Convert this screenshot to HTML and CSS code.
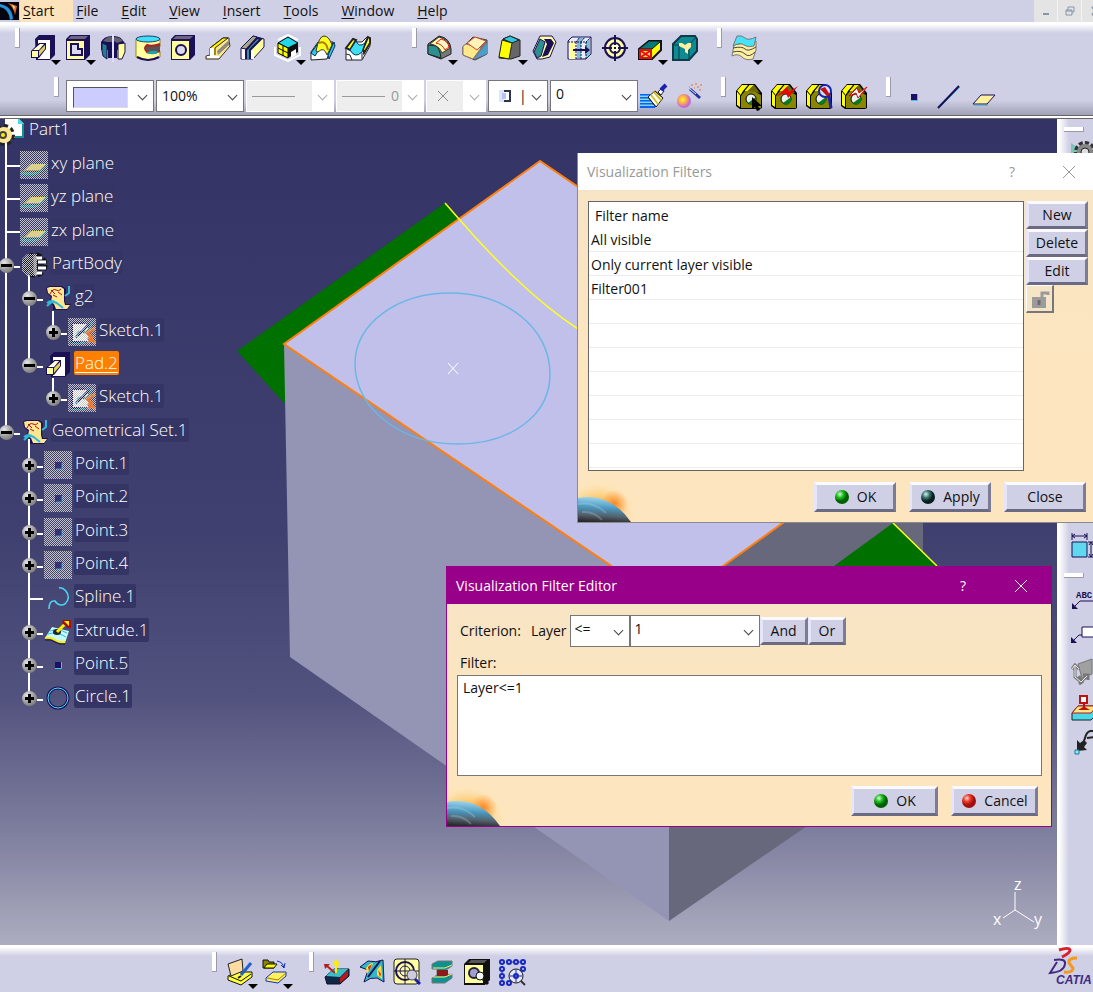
FILE: index.html
```html
<!DOCTYPE html>
<html lang="en">
<head>
  <meta charset="UTF-8" />
  <meta name="viewport" content="width=device-width, initial-scale=1.0" />
  <title>CATIA - Part1</title>
  <link rel="stylesheet" href="styles.css">
</head>
<body>
  <!-- shared symbols -->
  <svg class="defs" aria-hidden="true">
    <defs>
      <pattern id="dither" width="4" height="4" patternUnits="userSpaceOnUse">
        <path d="M0 0h1v1H0zM2 0h1v1H2zM1 1h1v1H1zM3 1h1v1H3zM0 2h1v1H0zM2 2h1v1H2zM1 3h1v1H1zM3 3h1v1H3z" fill="#c4c4c4" shape-rendering="crispEdges"/>
      </pattern>
      <radialGradient id="glow"><stop offset="0" stop-color="#ff9a3c"/><stop offset=".4" stop-color="#fbc050"/><stop offset="1" stop-color="#fde6bf" stop-opacity="0"/></radialGradient>
      <radialGradient id="flare"><stop offset="0" stop-color="#ff8420"/><stop offset="1" stop-color="#ff9a3c" stop-opacity="0"/></radialGradient>
      <linearGradient id="globe" x1=".55" y1="0" x2=".4" y2="1"><stop offset="0" stop-color="#a5dcf5"/><stop offset=".45" stop-color="#4a96bc"/><stop offset=".75" stop-color="#54606c"/><stop offset="1" stop-color="#2a2a2c"/></linearGradient>
      <radialGradient id="green" cx=".35" cy=".3"><stop offset="0" stop-color="#d8ffd0"/><stop offset=".5" stop-color="#20c020"/><stop offset="1" stop-color="#006000"/></radialGradient>
      <radialGradient id="teal" cx=".35" cy=".3"><stop offset="0" stop-color="#d5f5ee"/><stop offset=".5" stop-color="#3d7a70"/><stop offset="1" stop-color="#07201e"/></radialGradient>
      <radialGradient id="red" cx=".35" cy=".3"><stop offset="0" stop-color="#ffd9d0"/><stop offset=".5" stop-color="#f03a28"/><stop offset="1" stop-color="#a01010"/></radialGradient>
      <radialGradient id="ball" cx=".4" cy=".4"><stop offset="0" stop-color="#fff04a"/><stop offset=".5" stop-color="#ffb43c"/><stop offset="1" stop-color="#c76bd0"/></radialGradient>
      <symbol id="camera" viewBox="0 0 28 28">
        <path d="M1 23V8l6-7h13l7 9v15l-2 1H5z" fill="#000"/>
        <path d="M2 8l5-6h6L8 8l-3 5v11l-3-2z" fill="#ff0"/>
        <path d="M14 2h5l-6 6H9z" fill="#f0f000"/>
        <path d="M6 13l4-5h9l7 4v13H6z" fill="#8a8500"/>
        <path d="M13 8l6-6 6 8" fill="#6d6900"/>
        <path d="M9 8l5-6M6 13L2 8" stroke="#000" fill="none"/>
        <circle cx="16" cy="16" r="5" fill="#e8f0f0" stroke="#000"/>
        <path d="M13 20l8-6v5l-4 3z" fill="#0a7a20"/>
      </symbol>
      <symbol id="pad" viewBox="0 0 28 28">
        <path d="M6 5l4-4h16v20l-5 5H7z" fill="#1b0f55"/>
        <path d="M9 6h12v19H9z" fill="#fff"/>
        <path d="M2 17l8-8h7v6l-7 9H2z" fill="#1b0f55"/>
        <path d="M3 17h6v6H3z" fill="#ffffa0"/><path d="M4 16l7-6h4l-5 6z" fill="#ffffd8"/><path d="M10 17l6-6v4l-6 7z" fill="#e0d060"/>
      </symbol>
      <symbol id="plane" viewBox="0 0 28 28">
        <path d="M4 20L11 13h15l-6 7z" fill="#f0dc50"/><path d="M1 22h17l9-9M2 23h14" stroke="#117a88" stroke-width="2" fill="none"/><path d="M5 20h15" stroke="#1b0f55"/>
        <rect width="28" height="28" fill="url(#dither)"/>
      </symbol>
      <symbol id="point" viewBox="0 0 28 28">
        <rect x="11" y="11" width="6" height="6" fill="#1b0f66"/><path d="M11 17.500h6.500V11" stroke="#36c8e8" fill="none"/>
      </symbol>
      <symbol id="hiddenpoint" viewBox="0 0 28 28">
        <rect width="28" height="28" fill="url(#dither)"/><rect x="11" y="11" width="7" height="7" fill="#1b0f66" opacity=".7"/><path d="M12 18h6v-6" stroke="#36c8e8" fill="none" opacity=".7"/>
      </symbol>
      <symbol id="sketch" viewBox="0 0 28 28">
        <rect x="5" y="6" width="15" height="17" fill="#fff"/>
        <path d="M8 20q2-8 7-6t9-10M3 25h14" stroke="#117a88" stroke-width="2" fill="none"/>
        <path d="M4 5v19h8M4 5h12M10 18l11-12" stroke="#1b0f55" stroke-width="2" fill="none"/>
        <path d="M27 10l-8 5 5 4-4 6M20 19l8 6" stroke="#f36a10" stroke-width="3" fill="none"/>
        <rect width="28" height="28" fill="url(#dither)"/>
        <path d="M26 12l-6 4 4 3-3 5M22 20l5 4" stroke="#f36a10" stroke-width="2" fill="none" opacity=".7"/>
      </symbol>
      <symbol id="geoset" viewBox="0 0 28 28">
        <path d="M2 4l3-2h13l4 3-1 12 1 3h5l-4 6H9v-5l-4-2 2-6-4-4z" fill="#1b0f55"/>
        <path d="M3 4l3-1h11l3 2v12l1 4h5l-3 4H12l-2-5 -3-2 1-6-4-3z" fill="#fce790"/>
        <path d="M6 10q3-6 6-4t5-1M7 6l4 4M14 8l4 3M9 11l4 2" stroke="#b01020" fill="none"/>
        <path d="M3 22q6-7 11-2l5 4M3 19q5-4 9 0M25 2v7l-4 3" stroke="#30b8d8" stroke-width="2" fill="none"/>
      </symbol>
    </defs>
  </svg>

  <nav class="menubar">
    <svg class="start-logo" viewBox="0 0 20 22"><rect y="2" width="19" height="18" fill="#050510"/><path d="M0 4q12 2 13 15l-3 1Q9 9 0 7z" fill="#2490d8"/><path d="M8 3l9 3-2 9q-1-7-7-12z" fill="#e06a20"/><path d="M12 4l3 3-1 3z" fill="#ffd7a0"/></svg>
    <button class="menu active"><u>S</u>tart</button>
    <button class="menu"><u>F</u>ile</button>
    <button class="menu"><u>E</u>dit</button>
    <button class="menu"><u>V</u>iew</button>
    <button class="menu"><u>I</u>nsert</button>
    <button class="menu"><u>T</u>ools</button>
    <button class="menu"><u>W</u>indow</button>
    <button class="menu"><u>H</u>elp</button>
    <div class="mdi">
      <button aria-label="Minimize"><svg viewBox="0 0 12 12"><path d="M3 9h6" stroke="#8596ad" stroke-width="2"/></svg></button>
      <button aria-label="Restore"><svg viewBox="0 0 12 12"><path d="M2 5h6v5H2zM4 5V2h6v5H8M2 6h6" stroke="#8596ad" fill="none"/></svg></button>
      <button aria-label="Close window"><svg viewBox="0 0 12 12"><path d="M4 2l4 4-4 4M10 2L6 6l4 4" stroke="#8596ad" stroke-width="2" fill="none"/></svg></button>
    </div>
  </nav>

  <header class="toolbars">
    <div class="row row-features">
      <div class="group group-wide">
        <span class="handle"></span>
        <button class="tool drop" aria-label="Pad"><svg><use href="#pad"/></svg></button>
        <button class="tool drop" aria-label="Pocket"><svg viewBox="0 0 28 28"><path d="M2 5l4-4h20v20l-5 5H2z" fill="#1b0f55"/><path d="M3 7h17v18H3z" fill="#ffffa0"/><path d="M4 5l3-3h17l-3 3z" fill="#6c6480"/><path d="M7 10h7v5h4v6H7z" fill="#d9d9ef" stroke="#1b0f55" stroke-width="2"/></svg></button>
        <button class="tool" aria-label="Shaft"><svg viewBox="0 0 28 28"><path d="M2 8q3-6 11-6v22H9v-8H2z" fill="#1b0f55"/><path d="M25 8q-3-6-10-6v22h3v-8h7z" fill="#1b0f55"/><path d="M3 9l5 2v14l-4-3-1-5z" fill="#21808c" stroke="#1b0f55"/><path d="M19 10l7-1v9l-3 7h-4z" fill="#ffffa0" stroke="#1b0f55"/><path d="M4 7q5-5 9-4v5H8zM15 3q6 0 9 4l-6 2-3-2z" fill="#606070"/><path d="M14 0v28" stroke="#dfe0ff" stroke-width="2"/></svg></button>
        <button class="tool" aria-label="Groove"><svg viewBox="0 0 28 28"><path d="M2 5v18q12 6 24 0v-5l-4-2 4-3V5z" fill="#ffffa0" stroke="#a08028"/><ellipse cx="14" cy="5" rx="12" ry="3" fill="#40dfff" stroke="#1b4060"/><path d="M26 10q-8 3-13 1-4 3 0 7 6 2 13-1" stroke="#b02020" stroke-width="2" fill="#555"/><path d="M12 19q6-4 13-1-4 4-13 1z" fill="#21a0b0"/><path d="M3 23q11 6 22 0" stroke="#1b0f55" fill="none" stroke-width="2"/></svg></button>
        <button class="tool" aria-label="Hole"><svg viewBox="0 0 28 28"><path d="M2 5l4-4h20v20l-5 5H2z" fill="#1b0f55"/><path d="M3 7h17v18H3z" fill="#ffffa0"/><path d="M4 5l3-3h17l-3 3z" fill="#6c6480"/><circle cx="12" cy="16" r="5" fill="#d9d9ef" stroke="#1b0f55" stroke-width="2"/></svg></button>
        <button class="tool" aria-label="Rib"><svg viewBox="0 0 28 28"><path d="M2 25v-3l4-1v-7L19 4h6v3l1 5L15 25z" fill="#ffe98a" stroke="#333"/><path d="M13 17L25 6v5L14 21z" fill="#8f8a80"/><path d="M6 14L19 4h5L11 14v7" fill="#fff000" stroke="#222"/><path d="M3 22h3v-8h4v8h5v2H3z" fill="#fff"/></svg></button>
        <button class="tool" aria-label="Slot"><svg viewBox="0 0 28 28"><path d="M2 25V14L14 2l11 3v8L14 25z" fill="#ffffa0" stroke="#1b0f55"/><path d="M3 15h4v10H3zM11 17h4v8h-4z" fill="#fff"/><path d="M7 25v-9L18 4l4 1-11 11v9" fill="#3a8fa8" stroke="#1b0f55" stroke-width="2"/><path d="M2 14L14 2l4 1L7 15z" fill="#aaa68a" stroke="#1b0f55"/></svg></button>
        <button class="tool drop" aria-label="Solid Combine"><svg viewBox="0 0 28 28"><path d="M1 13v8l13 6 12-6v-8M4 6l10-5 10 5" fill="none" stroke="#fff" stroke-width="2"/><path d="M4 9l10-6 10 6-10 5z" fill="#1fd8e8" stroke="#000"/><path d="M4 9v10l10 5V14z" fill="#ff0" stroke="#000"/><path d="M14 14l10-5v9l-10 6z" fill="#111"/><path d="M9 12v10M4 14l10 5" stroke="#000"/><path d="M17 18l5-3v6l-5 3z" fill="#fff"/></svg></button>
        <button class="tool" aria-label="Multi-sections Solid"><svg viewBox="0 0 28 28"><path d="M2 26V18L9 8h15l-6 17z" fill="#fff" stroke="#222"/><path d="M2 19L10 8l3 2-7 12zM19 21l6-13 1 4-6 13z" fill="#30c8e0" stroke="#036"/><path d="M7 17Q10 2 15 2q5 0 8 9l-5 10q-3-9-9-3z" fill="#ffff20" stroke="#333"/><path d="M10 9q7-3 9 7" stroke="#b08000" stroke-width="2" fill="none"/></svg></button>
        <button class="tool" aria-label="Removed Multi-sections Solid"><svg viewBox="0 0 28 28"><path d="M2 26V14l7-9 4 3h5l5-5 3 1v8l-8 14z" fill="#fff" stroke="#222"/><path d="M2 14l7-9 3 1-6 10zM19 15l5-12 2 1v5l-6 10z" fill="#ffff20" stroke="#222" stroke-width="2"/><path d="M6 16l6-9q3 7 9 2l-3 9q-7 7-12-2z" fill="#40dff0" stroke="#036"/><path d="M2 20l4 1 2 5M18 25v-6" stroke="#222" fill="none"/></svg></button>
      </div>
      <div class="group">
        <span class="handle"></span>
        <button class="tool drop" aria-label="Edge Fillet"><svg viewBox="0 0 28 28"><path d="M2 10l11-8q11 2 12 13v5l-10 5L2 20z" fill="#777" stroke="#222"/><path d="M2 11l8 1q4 3 5 12L2 20z" fill="#2c9090" stroke="#222"/><path d="M4 10l9-7q9 2 11 11l-8 5q-3-8-12-9z" fill="#ffffa0" stroke="#333"/><path d="M10 9l5-4q7 2 8 8l-4 3q-3-6-9-7z" fill="#fff6c8" stroke="#e02020"/></svg></button>
        <button class="tool" aria-label="Chamfer"><svg viewBox="0 0 28 28"><path d="M2 13L12 3l14 3v14l-12 6-12-5z" fill="#777" stroke="#444"/><path d="M13 25L26 9v11z" fill="#4c9dcc"/><path d="M2 12l3-2 15 4-8 11-10-4z" fill="#ffe98a" stroke="#876"/><path d="M6 9l8-6 11 4-9 9z" fill="#fff3b8" stroke="#d04030"/></svg></button>
        <button class="tool drop" aria-label="Draft Angle"><svg viewBox="0 0 28 28"><path d="M3 24L7 5l7-3 10 4v16l-9 3z" fill="#666" stroke="#222"/><path d="M7 5l7-3 9 4-7 3z" fill="#30c8e0" stroke="#222"/><path d="M3 23L6 6l10 3-3 16z" fill="#ff0" stroke="#222"/></svg></button>
        <button class="tool" aria-label="Shell"><svg viewBox="0 0 28 28"><path d="M2 17L9 2h12l4 6-6 15-8 2H6z" fill="#ffffa0" stroke="#1b0f55"/><path d="M3 18L9 5l5 3-4 14-4 2z" fill="#2c9090" stroke="#1b0f55"/><path d="M13 5h7l3 4-6 12-6 2 5-13z" fill="#1b0f55"/></svg></button>
        <button class="tool" aria-label="Thickness"><svg viewBox="0 0 28 28"><path d="M2 7l4-4h19v17l-5 5H2z" fill="#e6ecfa" stroke="#1b0f55"/><path d="M3 8h7v17H3z" fill="#ffffa0"/><path d="M12 4l-1 4v16h4V8l4-5zM20 8l4-4v17l-4 4z" fill="#38a0b8" opacity=".6"/><path d="M10 8v18M15 8v18M20 8v18M2 8h19M10 8l4-5M15 8l4-5M20 8l5-5" stroke="#1b0f55" stroke-dasharray="2 1" fill="none"/><path d="M7 16h14" stroke="#1b0f55" stroke-width="2"/><path d="M19 12l5 4-5 4z" fill="#1b0f55"/></svg></button>
        <button class="tool" aria-label="Thread/Tap"><svg viewBox="0 0 28 28"><circle cx="14" cy="14" r="10" fill="#ffffa0" stroke="#1b0f55" stroke-width="2"/><circle cx="14" cy="14" r="5" fill="#ffffc8" stroke="#1b0f55" stroke-width="2"/><path d="M14 1v10M14 17v10M1 14h10M17 14h10M14 13v2" stroke="#1b0f55" stroke-width="2"/></svg></button>
        <button class="tool drop" aria-label="Remove Face"><svg viewBox="0 0 28 28"><path d="M3 15l10-8h12v9l-9 9H3z" fill="#ff0" stroke="#111" stroke-width="2"/><path d="M3 15l10-8h12l-9 8z" fill="#0a7878" stroke="#111"/><path d="M4 16h11v8H4z" fill="#ffe04a" stroke="#e01010" stroke-width="2"/><path d="M5 17l9 6M14 17l-9 6" stroke="#e01010" stroke-width="2" fill="none"/></svg></button>
        <button class="tool" aria-label="Replace Face"><svg viewBox="0 0 28 28"><path d="M2 10l8-8h14l2 3v12l-8 9H2z" fill="#0e8a92" stroke="#103a48" stroke-width="2"/><path d="M2 11h6M8 11v15M18 15v11M10 3L3 10M18 11l7-8" stroke="#103a48" fill="none"/><path d="M8 9h3l3 2 3-2h3v4l-3 3v4l-3-2v-3l-6-3z" fill="#fff0a0"/></svg></button>
      </div>
      <div class="group group-near">
        <span class="handle"></span>
        <button class="tool drop" aria-label="Thick Surface"><svg viewBox="0 0 28 28"><path d="M1 22l2-11 22-4v9l-3 9q-7 2-11-2t-10-1z" fill="#fff0a0" stroke="#777"/><path d="M2 18q8-2 12 2t10-2M2 14q9-2 12 1t11-2" stroke="#444" fill="none"/><path d="M2 12L6 2q5-1 8 2t11-1l-2 9q-6 2-10-1t-11 1z" fill="#48e2fa" stroke="#777"/></svg></button>
      </div>
    </div>

    <div class="row row-props">
      <span class="handle"></span>
      <div class="combos">
        <label class="combo swatch"><select aria-label="Color"><option></option></select></label>
        <label class="combo"><select aria-label="Transparency"><option>100%</option></select></label>
        <label class="combo off line"><select aria-label="Line width" disabled><option></option></select></label>
        <label class="combo off line num"><select aria-label="Line type" disabled><option>0</option></select></label>
        <label class="combo off small"><svg class="mark" viewBox="0 0 12 12"><path d="M1 1l10 10M11 1L1 11" stroke="#888" fill="none"/></svg><select aria-label="Point symbol" disabled><option></option></select></label>
        <label class="combo small"><svg class="mark" viewBox="0 0 12 12"><path d="M0 0h5v12H0z" fill="#dfe4fa"/><path d="M3 3h4v6H3z" fill="#b4c4f4"/><path d="M5 1h6v10H5" stroke="#2b3350" stroke-width="2" fill="none"/></svg><select class="bar" aria-label="Rendering style"><option>|</option></select></label>
        <label class="combo top"><select aria-label="Layer"><option>0</option></select></label>
      </div>
      <button class="tool painter" aria-label="Painter"><svg viewBox="0 0 28 28"><path d="M0 12h10M0 15h11M0 18h12M0 21h14M0 24h15" stroke="#1060f0" stroke-width="2"/><path d="M0 13h9M0 16h10M0 19h12M0 22h15" stroke="#50e0ff"/><path d="M8 14l7-6 8 7-7 9z" fill="#fff" stroke="#222"/><path d="M11 12l7 9M14 9l7 8" stroke="#d8c020" stroke-width="2"/><path d="M8 14l8 10M15 8l8 7" stroke="#222" fill="none"/><path d="M18 9l4-4 2 3-3 4z" fill="#fff" stroke="#222"/><path d="M21 7l5-5" stroke="#1b20b0" stroke-width="4"/></svg></button>
      <button class="tool" aria-label="Wizard"><svg viewBox="0 0 28 28"><circle cx="9" cy="18" r="7" fill="url(#ball)"/><path d="M15 6l10 9" stroke="#2436a0" stroke-width="3"/><path d="M15 6l6 5" stroke="#d8e8ff"/><path d="M16 2h2M20 1h2M22 4h2M25 2h2M19 5h1M24 7h2M14 4h1" stroke="#e0a080" stroke-width="2"/></svg></button>
      <div class="group group-near">
        <span class="handle"></span>
        <button class="tool" aria-label="Capture select"><svg viewBox="0 0 28 28"><use href="#camera"/><path d="M17 14v12l3-2 2 4 3-1-2-4h4z" fill="#000"/></svg></button>
        <button class="tool" aria-label="Update"><svg viewBox="0 0 28 28"><use href="#camera"/><path d="M7 13L17 4l2 5 9-6-10 12-2-5z" fill="#f00000"/></svg></button>
        <button class="tool" aria-label="Inspect"><svg viewBox="0 0 28 28"><use href="#camera"/><circle cx="20" cy="8" r="6" fill="#cfe0f4" stroke="#1b20b0" stroke-width="2"/><path d="M15 6l5-2 5 8-3 1z" fill="#c01010"/><path d="M24 13l2 12" stroke="#1b20b0" stroke-width="3"/></svg></button>
        <button class="tool" aria-label="Manual update"><svg viewBox="0 0 28 28"><use href="#camera"/><path d="M9 13l8-8 2 5 8-6-9 11-2-5z" fill="#fff" stroke="#e00000"/></svg></button>
      </div>
      <div class="group group-near">
        <span class="handle"></span>
        <button class="tool" aria-label="Point"><svg><use href="#point"/></svg></button>
        <button class="tool" aria-label="Line"><svg viewBox="0 0 28 28"><path d="M4 25L25 4" stroke="#30c0e8"/><path d="M3 25L24 3" stroke="#1b0f55" stroke-width="2"/></svg></button>
        <button class="tool" aria-label="Plane"><svg viewBox="0 0 28 28"><path d="M3 21l8-9h14l-8 9z" fill="#fff0a0" stroke="#1b0f55"/><path d="M4 22h14" stroke="#30a0c0"/></svg></button>
      </div>
    </div>
  </header>

  <main class="workspace">
    <section class="viewport">
      <svg class="scene" viewBox="0 119 1057 826" preserveAspectRatio="xMinYMin slice">
        <path d="M445 203L237 351l47 52 176-184z" fill="#007000"/>
        <path d="M284 344l385 261v316L290 657z" fill="#9494b5"/>
        <path d="M669 605l254-183v324l-254 175z" fill="#68687c"/>
        <path d="M893 523l-59 43h103z" fill="#007000"/>
        <path d="M540 161L284 344l385 261 254-183z" fill="#c1c0ea" stroke="#ff7f0e" stroke-width="2"/>
        <path d="M445 203l14 16q24 28 53 56 34 33 66 54M893 523l44 43" stroke="#ffff20" stroke-width="1.500" fill="none"/>
        <path d="M355 364C355 323 398 293 450 293C506 293 550 328 550 374C550 416 510 444 458 444C400 444 355 408 355 364z" fill="none" stroke="#6cb6e6" stroke-width="1.500"/>
        <path d="M448 363l10 11M458 363l-10 11" stroke="#fff"/>
        <path d="M1015 892v18l-12 8M1015 910l19 12" stroke="#fff" fill="none"/>
        <g class="axis"><text x="1014" y="890">z</text><text x="993" y="925">x</text><text x="1034" y="925">y</text></g>
      </svg>

      <div class="tree-wrap">
        <svg class="links" viewBox="0 0 200 600">
          <path d="M6 20v297M6 51h14M6 84h14M6 117h14M29 160v90M53 196v20M53 263v20M29 324v258M29 484h14" stroke="#fff" stroke-width="2" fill="none"/>
        </svg>
        <ul class="tree">
          <li class="root"><svg viewBox="0 0 28 28"><path d="M5 0h13l6 6v14H5z" fill="#fff"/><path d="M18 0v6h6" fill="#48d8e8"/><path d="M23 6v13H15" stroke="#109098" stroke-width="2" fill="none"/><circle cx="4" cy="17" r="9" fill="none" stroke="#222" stroke-width="4" stroke-dasharray="4 3"/><circle cx="4" cy="17" r="8" fill="#fce790"/><circle cx="3" cy="17" r="3" fill="#fe0" stroke="#444" stroke-width="2"/></svg><span class="name bare">Part1</span></li>
          <li class="l1 leaf"><svg><use href="#plane"/></svg><span class="name">xy plane</span></li>
          <li class="l1 leaf"><svg><use href="#plane"/></svg><span class="name">yz plane</span></li>
          <li class="l1 leaf"><svg><use href="#plane"/></svg><span class="name">zx plane</span></li>
          <li class="l1"><button class="knob open" aria-label="Collapse PartBody"></button><svg viewBox="0 0 28 28"><circle cx="14" cy="14" r="10" fill="none" stroke="#111" stroke-width="5" stroke-dasharray="5 3"/><circle cx="14" cy="14" r="9" fill="#1c1c28"/><path d="M14 7h7M17 11h8M17 17h8M14 22h7" stroke="#fff" stroke-width="3"/><path d="M14 5v18" stroke="#888" stroke-width="3"/><path d="M6 3h10v22H6l-5-5V8z" fill="url(#dither)"/></svg><span class="name">PartBody</span></li>
          <li class="l2"><button class="knob open" aria-label="Collapse g2"></button><svg><use href="#geoset"/></svg><span class="name">g2</span></li>
          <li class="l3"><button class="knob" aria-label="Expand Sketch.1"></button><svg><use href="#sketch"/></svg><span class="name">Sketch.1</span></li>
          <li class="l2"><button class="knob open" aria-label="Collapse Pad.2"></button><svg><use href="#pad"/></svg><span class="name selected">Pad.2</span></li>
          <li class="l3"><button class="knob" aria-label="Expand Sketch.1"></button><svg><use href="#sketch"/></svg><span class="name">Sketch.1</span></li>
          <li class="l1"><button class="knob open" aria-label="Collapse Geometrical Set.1"></button><svg><use href="#geoset"/></svg><span class="name">Geometrical Set.1</span></li>
          <li class="l2"><button class="knob" aria-label="Expand Point.1"></button><svg><use href="#hiddenpoint"/></svg><span class="name">Point.1</span></li>
          <li class="l2"><button class="knob" aria-label="Expand Point.2"></button><svg><use href="#hiddenpoint"/></svg><span class="name">Point.2</span></li>
          <li class="l2"><button class="knob" aria-label="Expand Point.3"></button><svg><use href="#hiddenpoint"/></svg><span class="name">Point.3</span></li>
          <li class="l2"><button class="knob" aria-label="Expand Point.4"></button><svg><use href="#hiddenpoint"/></svg><span class="name">Point.4</span></li>
          <li class="l2 leaf"><svg viewBox="0 0 28 28"><path d="M5 25q0-9 6-8 4 6 10 3 6-6 1-13-4-4-7-3" stroke="#48d8f4" stroke-width="1.500" fill="none"/></svg><span class="name">Spline.1</span></li>
          <li class="l2"><button class="knob" aria-label="Expand Extrude.1"></button><svg viewBox="0 0 28 28"><path d="M1 20l7-11 17 4-4 12q-5 0-9-3t-11-2z" fill="#c4f8ff"/><path d="M6 13q8-3 17 2M4 16q8-3 18 3" stroke="#30b8d8" fill="none"/><path d="M1 20q6-1 10 2t10 2" stroke="#fe0" stroke-width="2" fill="none"/><path d="M1 22q6-1 10 2t10 2" stroke="#1b0f55" fill="none"/><ellipse cx="13" cy="14" rx="4" ry="3" fill="#222"/><path d="M13 14l8-8" stroke="#fe0" stroke-width="3"/><path d="M19 2h8v8h-3l-6-5z" fill="#a01010"/><path d="M20 3h5v5z" fill="#fe0"/></svg><span class="name">Extrude.1</span></li>
          <li class="l2"><button class="knob" aria-label="Expand Point.5"></button><svg><use href="#point"/></svg><span class="name">Point.5</span></li>
          <li class="l2"><button class="knob" aria-label="Expand Circle.1"></button><svg viewBox="0 0 28 28"><circle cx="14" cy="14" r="10" stroke="#1b0f55" stroke-width="3" fill="none"/><circle cx="14" cy="14" r="10" stroke="#48e2fa" fill="none"/></svg><span class="name">Circle.1</span></li>
        </ul>
      </div>
    </section>

    <aside class="sidebar">
      <span class="handle flat"></span>
      <button class="tool gear" aria-label="Part Design"><svg viewBox="0 0 28 28"><path d="M0 3l6 4v14H0z" fill="#7cc4b8"/><circle cx="14" cy="12" r="9" stroke="#333" stroke-width="4" stroke-dasharray="4 2" fill="none"/><circle cx="14" cy="12" r="8" fill="#888"/><circle cx="14" cy="12" r="4" fill="#ddd" stroke="#222"/></svg></button>
      <button class="tool" aria-label="Constraint"><svg viewBox="0 0 28 28"><path d="M1 9h15v15H1z" fill="#60d8ee" stroke="#1b0f55"/><path d="M1 3h15M1 0v7M16 0v7M20 9v15M17 9h8M17 24h8M4 1L1 3l3 2M13 1l3 2-3 2M18 12l2-3 2 3M18 21l2 3 2-3" stroke="#1b0f55" fill="none"/></svg></button>
      <span class="handle flat second"></span>
      <button class="tool" aria-label="Text with Leader"><svg viewBox="0 0 28 28"><text class="abc" x="5" y="12">ABC</text><path d="M28 15H9l-6 6" stroke="#1b0f55" fill="none"/><path d="M1 17v6h6z" fill="#1b0f55"/></svg></button>
      <button class="tool" aria-label="Flag Note with Leader"><svg viewBox="0 0 28 28"><path d="M11 5h18v10H11z" fill="#fff" stroke="#1b0f55"/><path d="M11 13H8l-5 5" stroke="#1b0f55" fill="none"/><path d="M0 15v6h6z" fill="#1b0f55"/></svg></button>
      <button class="tool" aria-label="Annotation Plane"><svg viewBox="0 0 28 28"><path d="M7 6l14-5v15l-10 4z" fill="#a0a0a0" stroke="#777"/><path d="M4 7v12l6 5 7-7M1 11l3-4 4 4M8 18l3 6-3 2M12 17h5v5" stroke="#777" stroke-width="3" fill="none"/><path d="M4 8v11l6 5 6-6M1 11l3-4 4 4" stroke="#eee" fill="none"/></svg></button>
      <button class="tool" aria-label="Datum"><svg viewBox="0 0 28 28"><path d="M1 19l6-7h19v8l-6 6H1z" fill="#48d8e8" stroke="#222"/><path d="M1 19l6-7h19l-6 7z" fill="#ffe880" stroke="#c01010"/><path d="M9 2h7v7H9z" fill="#fff" stroke="#c01010" stroke-width="2"/><path d="M12 10v3l-5 3h12l-5-3v-3" fill="#c01010"/></svg></button>
      <button class="tool" aria-label="Text leader"><svg viewBox="0 0 28 28"><path d="M6 21V10l3 3 4-3 3 3-3 4 3 3z" fill="#222"/><path d="M13 11l2-6q2-4 5-4h6v10h-3M16 8l7-1" stroke="#222" stroke-width="2" fill="none"/><path d="M4 20h4v4H4z" fill="#9fe0f0" stroke="#1080a0"/></svg></button>
    </aside>

    <section class="dialog filters">
      <header class="title"><h2>Visualization Filters</h2><button class="help">?</button><button class="close" aria-label="Close dialog"><svg viewBox="0 0 14 14"><path d="M1 1l12 12M13 1L1 13"/></svg></button></header>
      <div class="content">
        <div class="columns">
          <div class="list">
            <table>
              <thead><tr><th>Filter name</th></tr></thead>
              <tbody>
                <tr><td>All visible</td></tr>
                <tr><td>Only current layer visible</td></tr>
                <tr><td>Filter001</td></tr>
                <tr><td></td></tr><tr><td></td></tr><tr><td></td></tr><tr><td></td></tr><tr><td></td></tr><tr><td></td></tr><tr><td></td></tr>
              </tbody>
            </table>
          </div>
          <div class="actions">
            <button class="btn">New</button>
            <button class="btn">Delete</button>
            <button class="btn">Edit</button>
            <button class="btn lock" aria-label="Lock" disabled><svg viewBox="0 0 20 20"><path d="M2 8h14v11H2z" fill="#9b9b9b"/><path d="M12 8V4h6v2" stroke="#9b9b9b" stroke-width="3" fill="none"/><path d="M9 11v5" stroke="#6c6c6c" stroke-width="3"/></svg></button>
          </div>
        </div>
        <footer class="buttons">
          <button class="btn"><svg viewBox="0 0 16 16"><circle cx="8" cy="8" r="7" fill="url(#green)"/></svg>OK</button>
          <button class="btn"><svg viewBox="0 0 16 16"><circle cx="8" cy="8" r="7" fill="url(#teal)"/></svg>Apply</button>
          <button class="btn">Close</button>
        </footer>
      </div>
      <svg class="planet" viewBox="0 0 60 42"><ellipse cx="20" cy="34" rx="40" ry="34" fill="url(#glow)"/><circle cx="36" cy="24" r="14" fill="url(#flare)"/><path d="M0 18Q32 12 53 42H0z" fill="url(#globe)"/><path d="M0 24q16-3 28 9M4 32q12-1 20 8" stroke="#c2dfee" stroke-width="2" opacity=".25" fill="none"/></svg>
    </section>

    <section class="dialog editor">
      <header class="title"><h2>Visualization Filter Editor</h2><button class="help">?</button><button class="close" aria-label="Close dialog"><svg viewBox="0 0 14 14"><path d="M1 1l12 12M13 1L1 13"/></svg></button></header>
      <div class="content">
        <div class="criterion">
          <span class="caption">Criterion:</span>
          <label for="operator">Layer</label>
          <span class="combo op top"><select id="operator"><option>&lt;=</option></select></span>
          <span class="combo value top"><select aria-label="Layer value"><option>1</option></select></span>
          <button class="btn">And</button>
          <button class="btn">Or</button>
        </div>
        <label class="filter-label" for="filterText">Filter:</label>
        <textarea id="filterText" spellcheck="false">Layer&lt;=1</textarea>
        <footer class="buttons">
          <button class="btn"><svg viewBox="0 0 16 16"><circle cx="8" cy="8" r="7" fill="url(#green)"/></svg>OK</button>
          <button class="btn"><svg viewBox="0 0 16 16"><circle cx="8" cy="8" r="7" fill="url(#red)"/></svg>Cancel</button>
        </footer>
      </div>
      <svg class="planet" viewBox="0 0 60 42"><ellipse cx="20" cy="34" rx="40" ry="34" fill="url(#glow)"/><circle cx="36" cy="24" r="14" fill="url(#flare)"/><path d="M0 18Q32 12 53 42H0z" fill="url(#globe)"/><path d="M0 24q16-3 28 9M4 32q12-1 20 8" stroke="#c2dfee" stroke-width="2" opacity=".25" fill="none"/></svg>
    </section>
  </main>

  <footer class="bottombar">
    <div class="group">
      <span class="handle"></span>
      <button class="tool drop" aria-label="Catalog"><svg viewBox="0 0 28 28"><path d="M2 18l8-4h16v5l-11 8-13-5z" fill="#ffff40" stroke="#111"/><path d="M2 6l14-5 1 12-12 5z" fill="#fcdca0" stroke="#222"/><path d="M3 18l12 5 10-7" stroke="#111" fill="none"/><path d="M15 17L25 5" stroke="#2060d0" stroke-width="3"/><path d="M12 20l3-2" stroke="#222" stroke-width="2"/></svg></button>
      <button class="tool drop" aria-label="Instantiate"><svg viewBox="0 0 28 28"><path d="M2 10V2h5l1 2h5v6z" fill="#8a8500" stroke="#111"/><path d="M3 10l3-4h10l-3 4z" fill="#ff0" stroke="#111"/><path d="M16 3q6 1 7 7M20 7l3 3 1-5" stroke="#1030c0" fill="none"/><path d="M5 20l7-6h13v4l-8 7-12-2z" fill="#fff060" stroke="#1030c0"/><path d="M6 20l11 2 8-7" stroke="#a08000" fill="none"/></svg></button>
    </div>
    <div class="group group-mid">
      <span class="handle"></span>
      <button class="tool" aria-label="Draft Analysis"><svg viewBox="0 0 28 28"><path d="M2 19l9-8h15v7l-9 8H4z" fill="#102848" stroke="#112"/><path d="M3 18l8-7h14l-8 8z" fill="#38c0c8"/><path d="M17 20l8-8v6l-8 7z" fill="#c01818"/><path d="M12 15L4 8" stroke="#b02020" stroke-width="2"/><path d="M1 6h6l-5 5z" fill="#b02020"/><path d="M13 15V5" stroke="#fe0" stroke-width="2"/><path d="M9 7l4-6 4 6z" fill="#fe0"/></svg></button>
      <button class="tool" aria-label="Curvature Analysis"><svg viewBox="0 0 28 28"><path d="M2 9l8-6q8 2 15-1l1 22-7-4q-7-1-13 4l4-12z" fill="#30b8c8" stroke="#1b0f55"/><path d="M8 10q6-7 7-4l-6 10z" fill="#ffe030"/><path d="M10 9l4-3-3 7z" fill="#e02010"/><path d="M19 12l4-5 1 14-5-4z" fill="#ffe030"/><path d="M20 12l3 4-1 3z" fill="#e02010"/><path d="M10 19L22 3" stroke="#1b0f55" stroke-width="2"/></svg></button>
      <button class="tool" aria-label="Tap/Thread Analysis"><svg viewBox="0 0 28 28"><rect x="1" y="1" width="25" height="25" rx="3" fill="#ffffa0" stroke="#222"/><circle cx="12" cy="13" r="9" fill="none" stroke="#1b0f55" stroke-width="2"/><circle cx="12" cy="13" r="5" fill="none" stroke="#1b0f55"/><path d="M12 1v25M1 13h25" stroke="#1b0f55"/><circle cx="19" cy="17" r="5" fill="#ccd" stroke="#445"/><path d="M22 21l5 5" stroke="#1b20b0" stroke-width="3"/></svg></button>
      <button class="tool" aria-label="Section"><svg viewBox="0 0 28 28"><path d="M4 6l6-3h14v5l-6 4v5l6-1v4l-7 5H4v-5l5-3v-6H4z" fill="#109090" stroke="#777"/><path d="M9 12h11v6H9z" fill="#8c1a1a"/><path d="M5 10h12l7-3M5 19h12l7-3" stroke="#fff060" fill="none"/></svg></button>
      <button class="tool" aria-label="Inspect Hole"><svg viewBox="0 0 28 28"><path d="M1 6l5-5h21v21l-5 5H1z" fill="#111"/><path d="M5 5l3-3h16l-3 3z" fill="#555"/><path d="M2 7h18v18H2z" fill="#ffffa0"/><circle cx="11" cy="15" r="5" fill="#a0a0d0" stroke="#223" stroke-width="2"/><circle cx="17" cy="18" r="4" fill="#f4f8f8" stroke="#111"/><path d="M20 21l5 5" stroke="#111" stroke-width="3"/></svg></button>
      <button class="tool" aria-label="Pattern Analysis"><svg viewBox="0 0 28 28"><path d="M2 4h24M4 2v24" stroke="#1828c0" stroke-dasharray="2 1"/><g fill="#cfcfe6" stroke="#1828c0" stroke-width="2"><circle cx="4" cy="4" r="2"/><circle cx="11" cy="4" r="2"/><circle cx="18" cy="4" r="2"/><circle cx="25" cy="4" r="2"/><circle cx="4" cy="11" r="2"/><circle cx="4" cy="18" r="2"/><circle cx="4" cy="25" r="2"/><circle cx="25" cy="11" r="2"/><circle cx="11" cy="25" r="2"/></g><circle cx="18" cy="18" r="7" fill="#e4e8f6" stroke="#111"/><circle cx="18" cy="18" r="2" fill="none" stroke="#1828c0" stroke-width="2"/><path d="M18 12v12M12 18h12" stroke="#1828c0"/><path d="M23 23l4 4" stroke="#333" stroke-width="2"/></svg></button>
    </div>
    <svg class="brand" viewBox="0 0 48 44">
      <path d="M12 4q10-3 11 0 0 3-8 7" stroke="#d8202c" stroke-width="3" fill="none"/>
      <path d="M7 14q12-2 11 4-1 8-15 9l7-11" stroke="#402a80" stroke-width="2" fill="none"/>
      <path d="M30 12q-9 0-8 5l4 5q0 5-9 4" stroke="#f39a1c" stroke-width="3" fill="none"/>
      <text x="9" y="38">CATIA</text>
    </svg>
  </footer>
</body>
</html>
```
FILE: styles.css
```css
* {
  box-sizing: border-box;
}
body {
  margin: 0;
  height: 100vh;
  display: flex;
  flex-direction: column;
  overflow: hidden;
  background: #cfcfe6;
  color: #111;
  font-family: "Open Sans", "Noto Sans", sans-serif;
  font-size: 14px;
  line-height: 20px;
}
button, select, textarea {
  font: inherit;
  color: inherit;
  border: none;
  background: none;
  padding: 0;
  margin: 0;
  border-radius: 0;
}
svg {
  display: block;
}
.defs {
  position: absolute;
  width: 0;
  height: 0;
}

/* menu */
.menubar {
  display: flex;
  height: 22px;
  flex: none;
}
.start-logo {
  width: 20px;
  height: 22px;
}
.menu {
  padding: 0 20px 0 3px;
}
.menu.active {
  padding-right: 19px;
  background: #fde3bb;
}
.menu u {
  text-underline-offset: 2px;
}
.mdi {
  margin-left: auto;
  margin-right: -12px;
  display: flex;
  gap: 1px;
  background: #f4f4f8;
}
.mdi button {
  width: 23px;
  background: #e4e4e4;
}
.mdi svg {
  width: 12px;
  height: 12px;
  margin: auto;
}

/* toolbars */
.toolbars {
  flex: none;
  height: 97px;
  padding-top: 5px;
  border-bottom: 4px double #666;
  background: linear-gradient(#fff 0, #fff 2px, #cfcfe6 11px, #cfcfe6 78px, #a0a0b6 93px);
}
.row {
  display: flex;
}
.row-features {
  padding-left: 15px;
  height: 48px;
}
.row-props {
  padding-left: 54px;
}
.group {
  display: flex;
  gap: 7px;
}
.group-wide {
  margin-right: 40px;
}
.group-near {
  margin-left: 18px;
}
.group-mid {
  margin-left: 20px;
}
.handle {
  width: 5px;
  height: 20px;
  margin: 1px 2px 0 0;
  background: #fff;
  border-right: 1px solid #9a9aa8;
  border-bottom: 1px solid #9a9aa8;
}
.tool {
  position: relative;
  flex: none;
  width: 28px;
  height: 28px;
  margin-top: 7px;
}
.tool svg {
  width: 28px;
  height: 28px;
}
.drop::after {
  content: "";
  position: absolute;
  left: 22px;
  top: 26px;
  border: 5px solid transparent;
  border-top-color: #000;
  border-bottom: none;
}
.row-props .tool {
  margin-top: 8px;
}
.row-props .painter {
  margin: 8px 7px 0 2px;
}
.row-props .handle {
  margin-top: 2px;
}
.combos {
  display: flex;
  gap: 2px;
  margin: 5px 0 0 5px;
}
.combo {
  position: relative;
  display: flex;
  align-items: center;
  width: 88px;
  height: 32px;
  background: #fff;
  border: 1px solid #777;
}
.combo::after {
  content: "";
  position: absolute;
  right: 7px;
  top: 11px;
  width: 6px;
  height: 6px;
  border-right: 1px solid #444;
  border-bottom: 1px solid #444;
  transform: rotate(45deg);
  pointer-events: none;
}
.combo select {
  appearance: none;
  width: 100%;
  height: 30px;
  padding-left: 5px;
  outline: none;
  opacity: 1;
}
.combo.small {
  width: 60px;
}
.combo.off {
  border-color: #fff;
  background: linear-gradient(90deg, #eee 65px, #fff 65px);
  color: #999;
}
.combo.off.small {
  background: linear-gradient(90deg, #eee 36px, #fff 36px);
}
.combo.off::after {
  border-color: #aaa;
}
.swatch::before {
  content: "";
  position: absolute;
  left: 6px;
  top: 6px;
  width: 53px;
  height: 19px;
  background: #ccccff;
  border: 1px solid #ddd;
  border-top-color: #555;
  border-left-color: #555;
}
.line::before {
  content: "";
  position: absolute;
  left: 5px;
  width: 43px;
  border-top: 1px solid #999;
}
.num select {
  padding-left: 54px;
}
.top select {
  padding-bottom: 5px;
}
.mark {
  position: absolute;
  left: 10px;
  width: 12px;
  height: 12px;
}
.combo .bar {
  padding-left: 30px;
}

/* 3D view */
.workspace {
  position: relative;
  flex: 1;
  min-height: 0;
  display: flex;
  overflow: hidden;
}
.viewport {
  position: relative;
  flex: 1;
  overflow: hidden;
  background: linear-gradient(#333366, #404070 50%, #52527e 70%, #8080a0 87%, #adadc0);
}
.scene {
  position: absolute;
  width: 100%;
  height: 100%;
}
.axis {
  fill: #fff;
  font-size: 16px;
}
.tree-wrap {
  position: absolute;
  top: -4px;
  left: 0;
  color: #fff;
}
.links {
  position: absolute;
  width: 200px;
  height: 600px;
}
.tree {
  position: relative;
  margin: 0;
  padding: 0;
  list-style: none;
  font-size: 17px;
  font-weight: 300;
}
.tree li {
  display: flex;
  align-items: flex-start;
  height: 33px;
  padding-top: 3px;
}
.tree li:nth-child(3n) {
  height: 34px;
}
.tree svg {
  width: 28px;
  height: 28px;
}
.tree .l2 {
  margin-left: 23px;
}
.tree .l3 {
  margin-left: 47px;
}
.tree .leaf {
  padding-left: 20px;
}
.tree .l2.leaf {
  padding-left: 21px;
}
.name {
  margin-left: 2px;
  padding: 0 1px;
  line-height: 24px;
  border-radius: 2px;
  background: #353565;
}
.bare {
  margin: 1px 0 0;
  line-height: 20px;
  background: none;
}
.selected {
  background: #ff7f00;
  text-decoration: underline;
  text-underline-offset: 3px;
}
.knob {
  position: relative;
  width: 15px;
  height: 15px;
  margin: 7px 7px 0 -1px;
  border-radius: 50%;
  background:
    linear-gradient(#000, #000) center / 9px 3px no-repeat,
    linear-gradient(#000, #000) center / 3px 9px no-repeat,
    radial-gradient(circle at 35% 30%, #e8e8e8, #999 50%, #666);
}
.knob.open {
  background:
    linear-gradient(#000, #000) center / 11px 3px no-repeat,
    radial-gradient(circle at 35% 30%, #e8e8e8, #999 50%, #666);
}
.knob::after {
  content: "";
  position: absolute;
  left: 15px;
  top: 8px;
  width: 6px;
  height: 2px;
  background: #fff;
}

.sidebar {
  width: 36px;
  flex: none;
  overflow: hidden;
  display: flex;
  flex-direction: column;
  gap: 8px;
  padding: 8px 0 0 14px;
  background: linear-gradient(90deg, #fff 2px, #cfcfe6 12px);
}
.sidebar .tool {
  margin: 0;
}
.sidebar .tool.gear {
  margin-bottom: 357px;
}
.handle.flat {
  flex: none;
  width: 20px;
  height: 5px;
  margin: 0 0 0 -7px;
}
.handle.second {
  margin-top: 4px;
}
.abc {
  font: bold 9px "Liberation Mono", monospace;
  fill: #1b0f55;
}

/* dialogs */
.dialog {
  position: absolute;
  display: flex;
  flex-direction: column;
  background: linear-gradient(#f6e4c6, #fde6bf 60%);
}
.filters {
  left: 577px;
  right: 0;
  top: 34px;
  height: 370px;
  border: solid #8a8a8a;
  border-width: 0 0 1px 1px;
}
.editor {
  left: 446px;
  top: 447px;
  width: 606px;
  height: 261px;
  border: 1px solid #990089;
}
.title {
  display: flex;
  align-items: center;
  height: 37px;
  flex: none;
  padding-left: 9px;
  background: #fff;
  color: #999;
}
.editor .title {
  background: #990089;
  color: #fff;
}
.title h2 {
  margin: 0 auto 0 0;
  font-size: 14px;
  font-weight: normal;
}
.title button {
  width: 56px;
}
.filters .close {
  width: 48px;
}
.filters .help {
  width: 66px;
}
.editor .close {
  width: 60px;
}
.title .close svg {
  width: 14px;
  height: 14px;
  margin: 0 auto;
  fill: none;
  stroke: currentColor;
}
.content {
  position: relative;
  z-index: 1;
  display: flex;
  flex-direction: column;
  flex: 1;
}
.filters .content {
  padding: 11px 5px 10px 10px;
}
.columns {
  display: flex;
  gap: 2px;
}
.list {
  flex: 1;
  height: 270px;
  background: #fff;
  border: 1px solid #666;
}
.list table {
  width: 100%;
  border-collapse: collapse;
}
.list th {
  height: 25px;
  padding: 3px 0 0 6px;
  text-align: left;
  font-weight: normal;
}
.list td {
  height: 24px;
  padding: 3px 0 0 2px;
  border-bottom: 1px solid #ececec;
}
.actions {
  width: 62px;
}
.btn {
  display: flex;
  align-items: center;
  justify-content: center;
  gap: 7px;
  height: 28px;
  background: #cfcfe6;
  border: 3px solid;
  border-color: #fafaff #7c7c96 #6a6a82 #e6e6fa;
}
.btn svg {
  width: 16px;
  height: 16px;
}
.actions .btn {
  width: 62px;
}
.actions .lock {
  width: 28px;
  background: #f6e4c6;
  border-width: 1px 2px 2px 1px;
  border-color: #fff #777 #777 #fff;
}
.lock svg {
  width: 20px;
  height: 20px;
}
.buttons {
  display: flex;
  justify-content: flex-end;
  gap: 13px;
  margin-top: auto;
}
.buttons .btn {
  width: 82px;
  height: 30px;
}
.filters .buttons {
  padding-right: 2px;
}
.editor .buttons .btn {
  width: 87px;
}
.editor .content {
  padding: 11px 9px 10px 10px;
}
.editor .buttons {
  padding-right: 4px;
}
.criterion {
  display: flex;
  align-items: center;
  padding-left: 3px;
}
.caption {
  margin-right: 10px;
}
.criterion .op {
  width: 60px;
  margin-left: 3px;
}
.criterion .value {
  width: 130px;
}
.criterion .combo select {
  padding-left: 4px;
}
.criterion .btn {
  padding: 0 8px;
}
.filter-label {
  padding: 6px 3px 2px;
}
.editor textarea {
  height: 101px;
  padding: 2px 5px;
  resize: none;
  background: #fff;
  border: 1px solid #777;
}
.planet {
  position: absolute;
  left: 0;
  bottom: 0;
  width: 60px;
  height: 42px;
}

/* bottom */
.bottombar {
  position: relative;
  flex: none;
  display: flex;
  height: 47px;
  padding: 6px 0 0 212px;
  background: linear-gradient(#fff 2px, #cfcfe6 11px);
}
.bottombar .tool {
  margin-top: 7px;
}
.brand {
  width: 48px;
  height: 44px;
  margin: -5px -2px 0 auto;
}
.brand text {
  font: italic bold 12px "Liberation Sans", sans-serif;
  fill: #402a80;
}
```
